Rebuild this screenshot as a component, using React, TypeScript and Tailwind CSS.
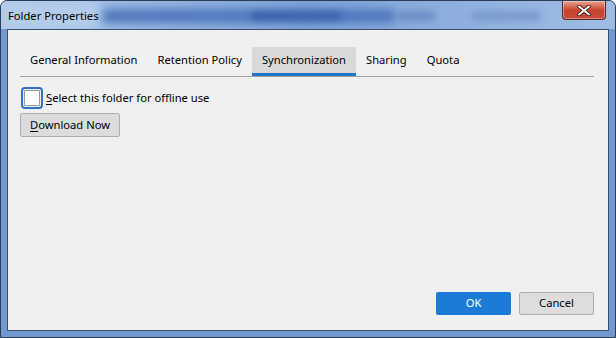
import React from 'react';

const tabs = ['General Information', 'Retention Policy', 'Synchronization', 'Sharing', 'Quota'];

const CloseButton = () => (
  <div className="mr-[9px] ml-auto h-[19px] w-[44px] rounded-b-[4px] border border-t-0 border-[#5a2a26] bg-gradient-to-b from-[#e8a493] via-[#c7432f] to-[#c24d3a] flex items-center justify-center shadow-[inset_0_0_0_1px_rgba(255,255,255,0.35)]">
    <svg width="14" height="11" viewBox="0 0 14 11">
      <path d="M2 1.5 L12 9.5 M12 1.5 L2 9.5" stroke="#3a1a16" strokeWidth="3.6" strokeLinecap="round" />
      <path d="M2 1.5 L12 9.5 M12 1.5 L2 9.5" stroke="#ffffff" strokeWidth="2" strokeLinecap="round" />
    </svg>
  </div>
);

const App = () => {
  return (
    <div
      className="w-[616px] h-[338px] flex flex-col rounded-t-[7px] border border-[#2b3c57] bg-[#7298cf] overflow-hidden text-[11.2px] text-black"
      style={{ fontFamily: '"Noto Sans", sans-serif' }}
    >
      {/* title bar */}
      <div className="relative h-[28px] flex items-start bg-gradient-to-r from-[#adc8ea] via-[#7fa3d8] to-[#9fbde4]">
        <div className="absolute inset-0 overflow-hidden">
          <div className="absolute left-[95px] top-[8px] h-[14px] w-[300px] rounded-full bg-[#5079bd] blur-[4px]" />
          <div className="absolute left-[250px] top-[11px] h-[8px] w-[90px] rounded-full bg-[#3a63aa] blur-[3px]" />
          <div className="absolute left-[395px] top-[10px] h-[10px] w-[40px] rounded-full bg-[#6d8fc8] blur-[3px]" />
          <div className="absolute left-[470px] top-[10px] h-[10px] w-[70px] rounded-full bg-[#7b9bd0] blur-[3px]" />
          <div className="absolute left-0 top-0 h-[28px] w-[100px] bg-[#b4cdeb] blur-[6px]" />
        </div>
        <div className="relative pl-[7px] pt-[7px] leading-[16px]">Folder Properties</div>
        <div className="relative ml-auto">
          <CloseButton />
        </div>
      </div>

      {/* client area */}
      <div className="mx-[6px] mb-[6px] flex-1 flex flex-col border border-[#3a506f] bg-[#f0f0f0] px-[12px] pt-[17px] pb-[15px]">
        <div className="mr-[2px] flex border-b border-[#a0a0a0]">
          {tabs.map((t) => (
            <div
              key={t}
              className={
                t === 'Synchronization'
                  ? 'h-[29px] px-[10px] flex items-center bg-[#d9d9d9] border-b-[3px] border-[#1d75c9]'
                  : 'h-[29px] px-[10px] flex items-center border-b-[3px] border-transparent'
              }
            >
              {t}
            </div>
          ))}
        </div>

        <div className="mt-[10px] flex items-center">
          <div className="ml-[1px] h-[22px] w-[22px] rounded-[4px] border-2 border-[#2d74c8] p-[1px]">
            <div className="h-full w-full rounded-[1px] border border-[#9a9a9a] bg-white" />
          </div>
          <span className="ml-[3px]">
            <span className="underline underline-offset-2">S</span>elect this folder for offline use
          </span>
        </div>

        <button className="mt-[4px] h-[24px] w-[100px] rounded-[2px] border border-[#adadad] bg-[#dcdcdc]">
          <span className="underline underline-offset-2">D</span>ownload Now
        </button>

        <div className="mt-auto flex justify-end gap-[8px] pr-[2px]">
          <button className="h-[23px] w-[75px] rounded-[2px] bg-[#1b7bd6] text-white">OK</button>
          <button className="h-[23px] w-[75px] rounded-[2px] border border-[#adadad] bg-[#dddddd]">Cancel</button>
        </div>
      </div>
    </div>
  );
};

export default App;
